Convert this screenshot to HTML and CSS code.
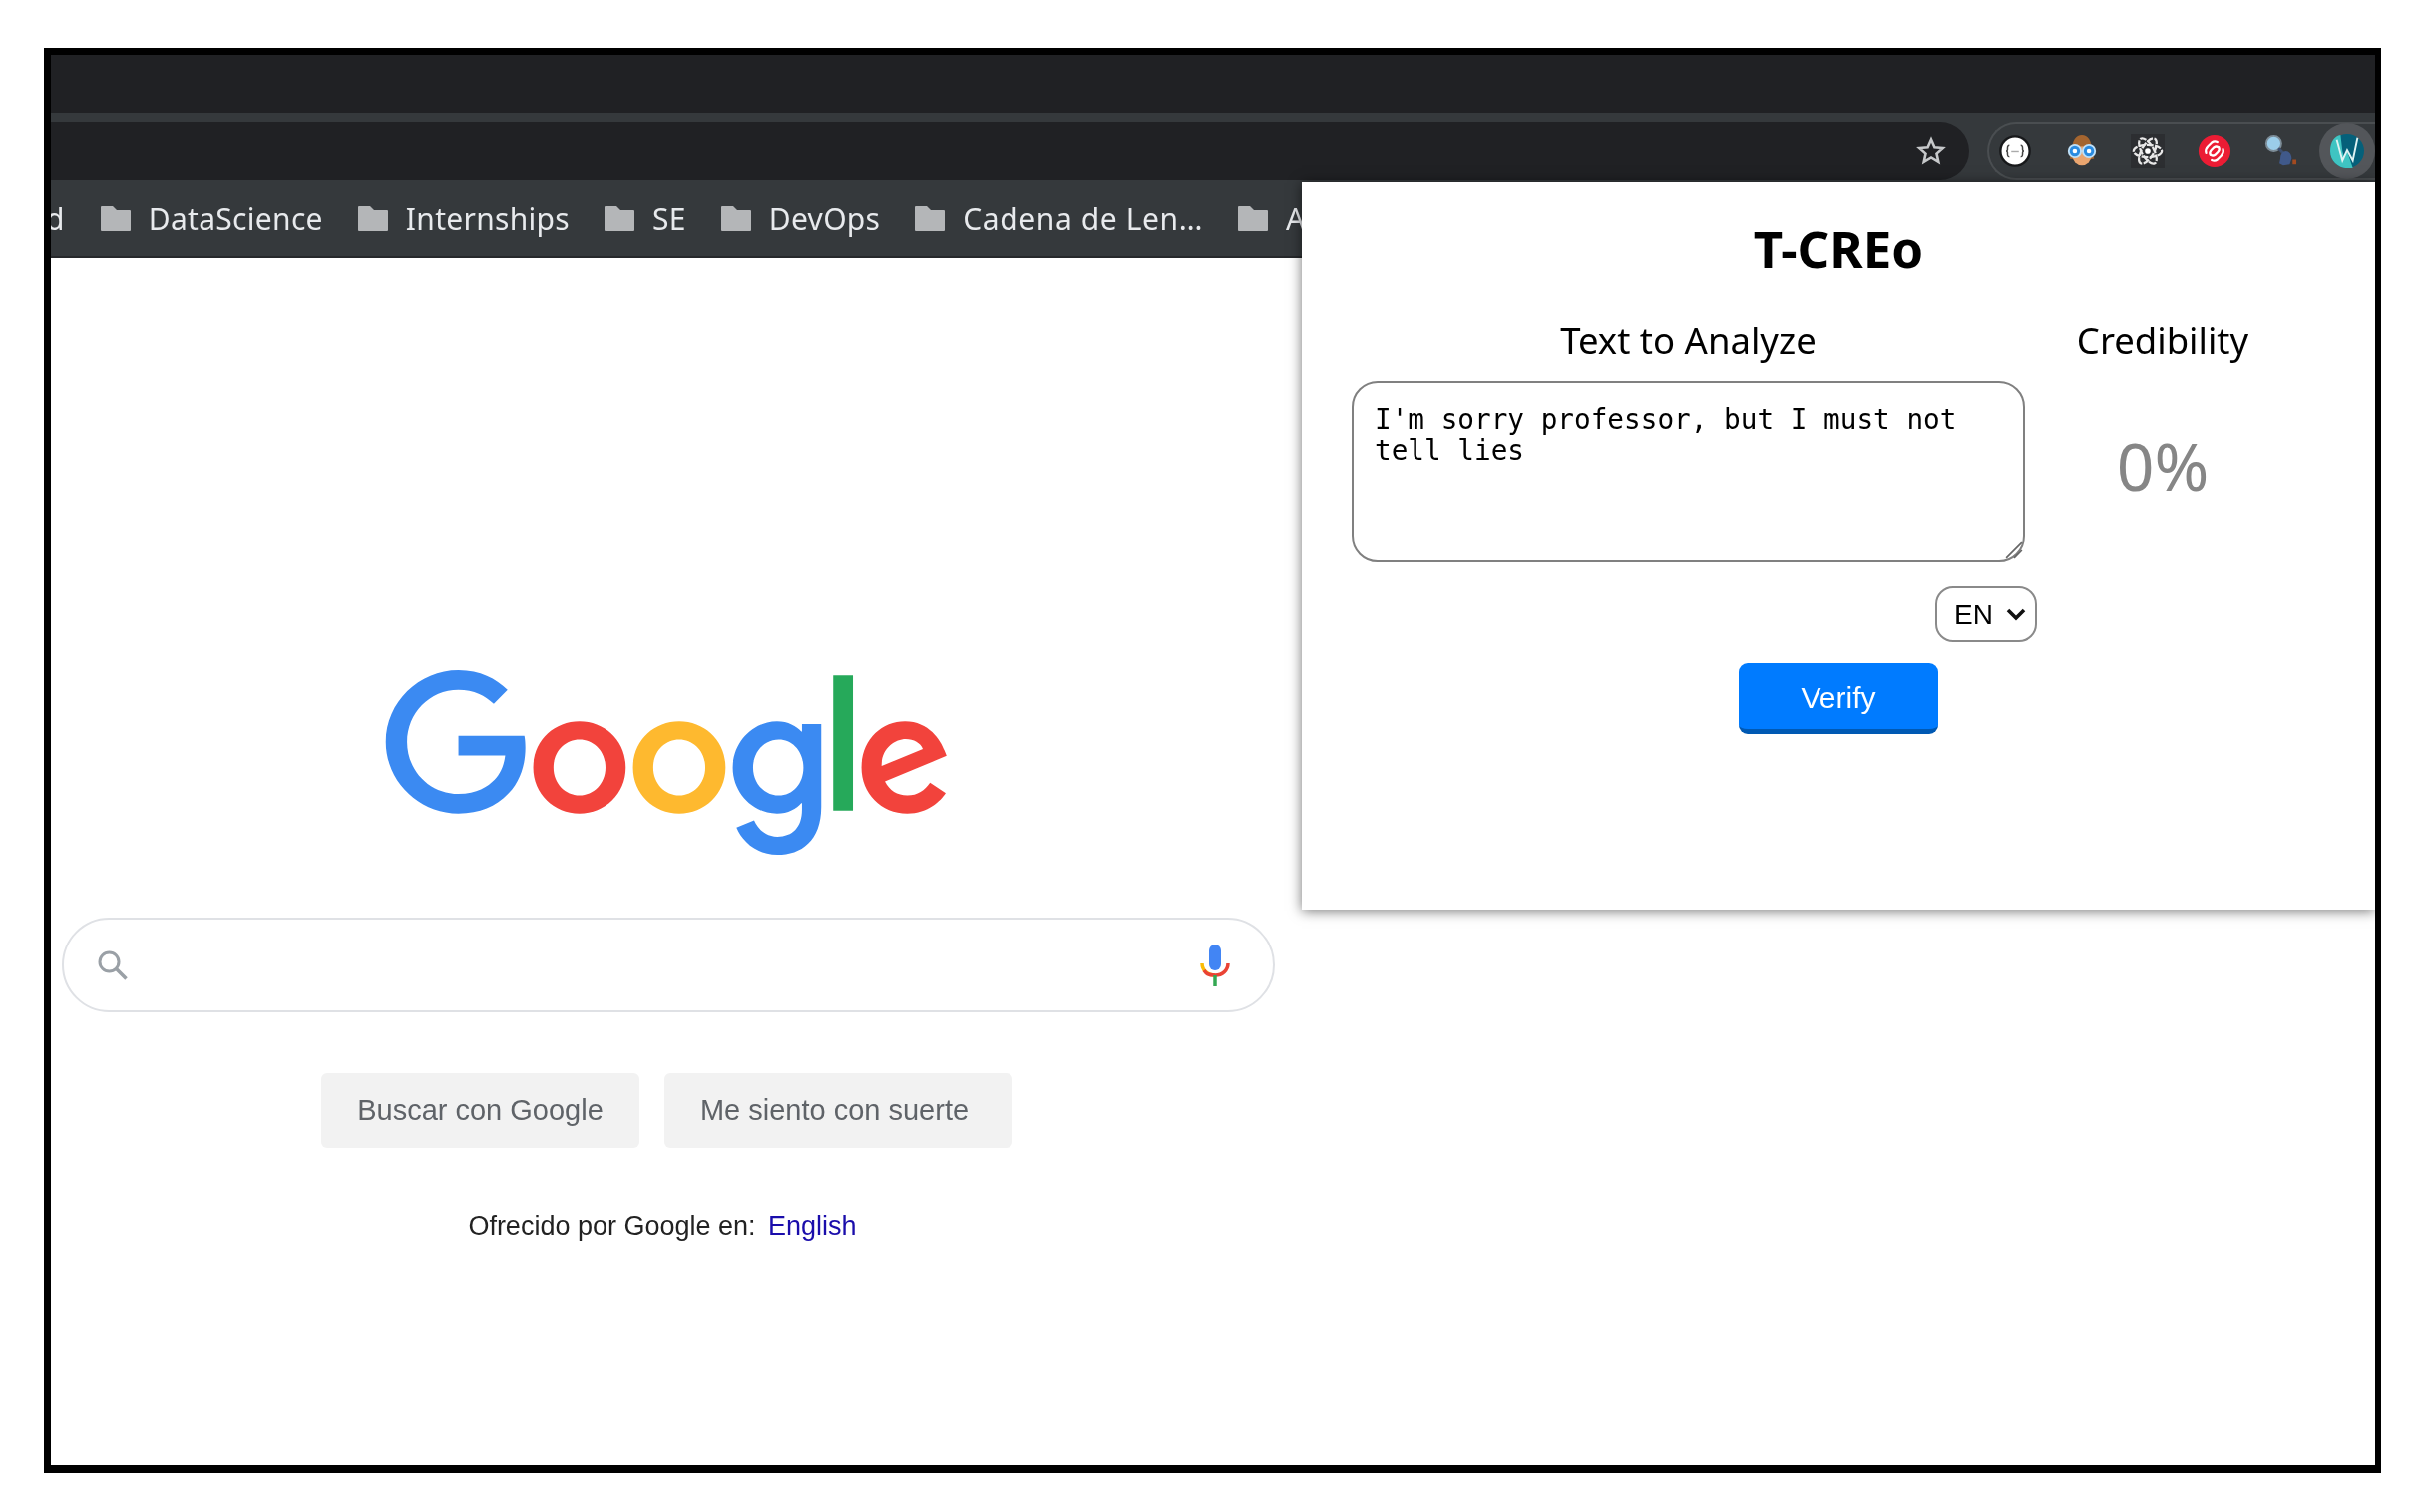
FILE: index.html
```html
<html>
<head>
    <title>T-CREo</title>
    <link rel="stylesheet" href="styles.css">
</head>
<body>
    <div class="frame">
        <div class="screen">
            <div class="tabstrip"></div>

            <div class="toolbar">
                <div class="omnibox">
                    <svg class="star" viewBox="0 0 30 30"><path d="M15 3.5l3.4 7.7 8.4.8-6.3 5.6 1.8 8.2-7.3-4.3-7.3 4.3 1.8-8.2-6.3-5.6 8.4-.8z"/></svg>
                </div>
                <div class="extensions">
                    <span class="ext">
                        <svg viewBox="0 0 36 36"><circle cx="18" cy="18" r="15.5" fill="#fff" stroke="#17181a" stroke-width="2.500"/><path d="M12 12c-2 0-2 1-2 3v1.500c0 1-.7 1.500-1.500 1.500.8 0 1.500.5 1.500 1.500V21c0 2 0 3 2 3M24 12c2 0 2 1 2 3v1.500c0 1 .7 1.500 1.500 1.500-.8 0-1.500.5-1.500 1.500V21c0 2 0 3-2 3" fill="none" stroke="#444" stroke-width="1.600"/><path d="M14 18.500h8" stroke="#aaa" stroke-width="1.500"/></svg>
                    </span>
                    <span class="ext">
                        <svg viewBox="0 0 36 36"><path d="M8 17C7 7 12 1 18 1s11 6 10 16l3 9-6 1H11l-6-1z" fill="#a4652f"/><circle cx="18" cy="23" r="10" fill="#eaa56f"/><circle cx="10.500" cy="18" r="6.500" fill="#2a8be0" stroke="#bfe0f7" stroke-width="2"/><circle cx="25.500" cy="18" r="6.500" fill="#2a8be0" stroke="#bfe0f7" stroke-width="2"/><circle cx="10.500" cy="18" r="2.400" fill="#fff"/><circle cx="25.500" cy="18" r="2.400" fill="#fff"/></svg>
                    </span>
                    <span class="ext ext-dark">
                        <svg viewBox="0 0 36 36" fill="none" stroke="#e8e8e8" stroke-width="2.400" stroke-dasharray="7 1.500"><ellipse cx="18" cy="18" rx="15" ry="6.500"/><ellipse cx="18" cy="18" rx="15" ry="6.500" transform="rotate(60 18 18)"/><ellipse cx="18" cy="18" rx="15" ry="6.500" transform="rotate(120 18 18)"/><circle cx="18" cy="18" r="3" fill="#fff" stroke="none"/></svg>
                    </span>
                    <span class="ext">
                        <svg viewBox="0 0 36 36"><circle cx="18" cy="18" r="17" fill="#ec1c34"/><path d="M9 20c-1-3 0-5 2-7l4-4c2-1.500 4-1.500 6-.5M27 16c1 3 0 5-2 7l-4 4c-2 1.500-4 1.500-6 .5M13.500 22c-1-2-.5-3.500 1-5l3-3c1.500-1 3-1 4.500 0M22.500 14c1 2 .5 3.500-1 5l-3 3c-1.500 1-3 1-4.500 0" fill="none" stroke="#fff" stroke-width="2.400" stroke-linecap="round"/></svg>
                    </span>
                    <span class="ext">
                        <svg viewBox="0 0 36 36"><circle cx="11" cy="10" r="8" fill="#9bcdea" stroke="#7d8d98" stroke-width="2"/><path d="M16 15l6 6" stroke="#3d4f70" stroke-width="3"/><path d="M18 26c0-5 3-8 6-8s6 3 6 8l-2 6-7 1-4-2z" fill="#40598a"/><path d="M31 27h4v5h-4z" fill="#a34a20"/></svg>
                    </span>
                    <span class="ext ext-active">
                        <svg viewBox="0 0 36 36"><circle cx="18" cy="18" r="18" fill="#05607a"/><path d="M0 18C0 8 5 2 11 1l2 17 5 18C8 36 0 28 0 18z" fill="#3fc4c2"/><path d="M12 31l6-13 6 18H16z" fill="#3fc4c2"/><path d="M7 6l6 22 5-11 6 11 5-24" fill="none" stroke="#dff3f3" stroke-width="2"/></svg>
                    </span>
                </div>
            </div>

            <div class="bookmarks">
                <span class="bookmark-cut">d</span>
                <span class="bookmark">
                    <svg class="folder" viewBox="0 0 30 25"><path d="M1 0h11l4 4h13a1 1 0 0 1 1 1v19a1 1 0 0 1-1 1H1a1 1 0 0 1-1-1V1a1 1 0 0 1 1-1z"/></svg>
                    DataScience
                </span>
                <span class="bookmark">
                    <svg class="folder" viewBox="0 0 30 25"><path d="M1 0h11l4 4h13a1 1 0 0 1 1 1v19a1 1 0 0 1-1 1H1a1 1 0 0 1-1-1V1a1 1 0 0 1 1-1z"/></svg>
                    Internships
                </span>
                <span class="bookmark">
                    <svg class="folder" viewBox="0 0 30 25"><path d="M1 0h11l4 4h13a1 1 0 0 1 1 1v19a1 1 0 0 1-1 1H1a1 1 0 0 1-1-1V1a1 1 0 0 1 1-1z"/></svg>
                    SE
                </span>
                <span class="bookmark">
                    <svg class="folder" viewBox="0 0 30 25"><path d="M1 0h11l4 4h13a1 1 0 0 1 1 1v19a1 1 0 0 1-1 1H1a1 1 0 0 1-1-1V1a1 1 0 0 1 1-1z"/></svg>
                    DevOps
                </span>
                <span class="bookmark bookmark-long">
                    <svg class="folder" viewBox="0 0 30 25"><path d="M1 0h11l4 4h13a1 1 0 0 1 1 1v19a1 1 0 0 1-1 1H1a1 1 0 0 1-1-1V1a1 1 0 0 1 1-1z"/></svg>
                    Cadena de Len…
                </span>
                <span class="bookmark">
                    <svg class="folder" viewBox="0 0 30 25"><path d="M1 0h11l4 4h13a1 1 0 0 1 1 1v19a1 1 0 0 1-1 1H1a1 1 0 0 1-1-1V1a1 1 0 0 1 1-1z"/></svg>
                    A
                </span>
            </div>

            <div class="page">
                <svg class="logo" viewBox="0 0 272 92">
                    <path class="red" d="M115.75 47.18c0 12.77-9.99 22.18-22.25 22.18s-22.25-9.41-22.25-22.18C71.25 34.32 81.24 25 93.5 25s22.25 9.32 22.25 22.18zm-9.74 0c0-7.98-5.79-13.44-12.51-13.44S80.99 39.2 80.99 47.18c0 7.9 5.79 13.44 12.51 13.44s12.51-5.55 12.51-13.44z"/>
                    <path class="yellow" d="M163.75 47.18c0 12.77-9.99 22.18-22.25 22.18s-22.25-9.41-22.25-22.18c0-12.85 9.99-22.18 22.25-22.18s22.25 9.32 22.25 22.18zm-9.74 0c0-7.98-5.79-13.44-12.51-13.44s-12.51 5.46-12.51 13.44c0 7.9 5.79 13.44 12.51 13.44s12.51-5.55 12.51-13.44z"/>
                    <path class="blue" d="M209.75 26.34v39.82c0 16.38-9.66 23.07-21.08 23.07-10.75 0-17.22-7.19-19.66-13.07l8.48-3.53c1.51 3.61 5.21 7.87 11.17 7.87 7.31 0 11.84-4.51 11.84-13v-3.19h-.34c-2.18 2.69-6.38 5.04-11.68 5.04-11.09 0-21.25-9.66-21.25-22.09 0-12.52 10.16-22.26 21.25-22.26 5.29 0 9.49 2.35 11.68 4.96h.34v-3.61h9.25zm-8.56 20.92c0-7.81-5.21-13.52-11.84-13.52-6.72 0-12.35 5.71-12.35 13.52 0 7.73 5.63 13.36 12.35 13.36 6.63 0 11.84-5.63 11.84-13.36z"/>
                    <path class="green" d="M225 3v65h-9.5V3h9.5z"/>
                    <path class="red" d="M262.02 54.48l7.56 5.04c-2.44 3.61-8.32 9.83-18.48 9.83-12.6 0-22.01-9.74-22.01-22.18 0-13.19 9.49-22.18 20.92-22.18 11.51 0 17.14 9.16 18.98 14.11l1.01 2.52-29.65 12.28c2.27 4.45 5.8 6.72 10.75 6.72 4.96 0 8.4-2.44 10.92-6.14zm-23.27-7.98l19.82-8.23c-1.09-2.77-4.37-4.7-8.23-4.7-4.95 0-11.84 4.37-11.59 12.93z"/>
                    <path class="blue" d="M35.29 41.41V32H67c.31 1.64.47 3.58.47 5.68 0 7.06-1.93 15.79-8.15 22.01-6.05 6.3-13.78 9.66-24.02 9.66C16.32 69.35.36 53.89.36 34.91.36 15.93 16.32.47 35.3.47c10.5 0 17.98 4.12 23.6 9.49l-6.64 6.64c-4.03-3.78-9.49-6.72-16.97-6.72-13.86 0-24.7 11.17-24.7 25.03 0 13.86 10.84 25.03 24.7 25.03 8.99 0 14.11-3.61 17.39-6.89 2.66-2.66 4.41-6.46 5.1-11.65l-22.49.01z"/>
                </svg>

                <div class="searchbox">
                    <svg class="search-icon" viewBox="0 0 32 32"><circle cx="12.500" cy="12.500" r="9.500" fill="none" stroke="#9aa0a6" stroke-width="3"/><path d="M19.500 19.500l10 10" stroke="#9aa0a6" stroke-width="3.500"/></svg>
                    <svg class="mic-icon" viewBox="0 0 30 42">
                        <rect x="9" y="0" width="12" height="26" rx="6" fill="#4285f4"/>
                        <path d="M2 19c0 7 5.500 12 13 12" fill="none" stroke="#fbbc05" stroke-width="3.500"/>
                        <path d="M28 19c0 7-5.500 12-13 12s-9-2-11-5" fill="none" stroke="#ea4335" stroke-width="3.500"/>
                        <path d="M15 31v11" stroke="#34a853" stroke-width="3.500"/>
                    </svg>
                </div>

                <div class="search-buttons">
                    <span class="gbutton gbutton-search">Buscar con Google</span>
                    <span class="gbutton gbutton-lucky">Me siento con suerte</span>
                </div>

                <p class="offered">Ofrecido por Google en: <a class="lang-link">English</a></p>
            </div>

            <section class="popup">
                <h1>T-CREo</h1>
                <div class="popup-columns">
                    <div class="analyze">
                        <h2>Text to Analyze</h2>
                        <div class="text-wrap">
                            <textarea class="analyze-text" spellcheck="false">I'm sorry professor, but I must not tell lies</textarea>
                            <svg class="grip" viewBox="0 0 16 16"><path d="M1 15L15 1M8 15l7-7" fill="none" stroke="#666" stroke-width="1.500"/></svg>
                        </div>
                        <select class="lang-select"><option>EN</option></select>
                    </div>
                    <div class="credibility">
                        <h2>Credibility</h2>
                        <p class="score">0%</p>
                    </div>
                </div>
                <button class="verify-btn">Verify</button>
            </section>
        </div>
    </div>
</body>
</html>
```

FILE: styles.css
```css
html, body { margin: 0; background: white; }
body { font-family: 'Liberation Sans', Arial, sans-serif; }

.frame {
    width: 2343px;
    height: 1429px;
    margin: 48px 0 0 44px;
    border-style: solid;
    border-color: black;
    border-width: 7px 6px 8px 7px;
    box-sizing: border-box;
}
.screen {
    position: relative;
    height: 100%;
    overflow: hidden;
    background: white;
    filter: blur(0.6px);
}

/* browser chrome */
.tabstrip { height: 58px; background: #202124; }
.toolbar {
    display: flex;
    height: 69px;
    padding-top: 9px;
    box-sizing: border-box;
    background: #35393c;
}
.omnibox {
    display: flex;
    align-items: center;
    justify-content: flex-end;
    flex: none;
    width: 1923px;
    height: 58px;
    padding-right: 23px;
    box-sizing: border-box;
    background: #202124;
    border-radius: 0 29px 29px 0;
}
.star { width: 30px; height: 30px; fill: none; stroke: #c6c8ca; stroke-width: 2.6; }
.extensions {
    display: flex;
    align-items: center;
    flex: none;
    width: 389px;
    height: 58px;
    margin-left: 18px;
    box-sizing: border-box;
    border: 2px solid #4a4e51;
    border-right: none;
    border-radius: 29px 0 0 29px;
}
.ext {
    display: flex;
    align-items: center;
    justify-content: center;
    flex: none;
    width: 66.5px;
    height: 100%;
}
.ext:first-child { margin-left: -7px; }
.ext svg { width: 34px; height: 34px; }
.ext-dark svg { background: #2c2e31; }
.ext-active {
    width: 56px;
    height: 56px;
    margin-left: 5px;
    border-radius: 50%;
    background: #53565a;
}

.bookmarks {
    display: flex;
    align-items: center;
    gap: 35px;
    height: 75px;
    overflow: hidden;
    background: #35393c;
    color: #e8eaed;
    font-family: 'Noto Sans', sans-serif;
    font-size: 30px;
    letter-spacing: 0.3px;
    white-space: nowrap;
    border-bottom: 2px solid #26282b;
}
.bookmark-cut { margin-left: -5px; margin-right: 1px; }
.bookmark { display: flex; align-items: center; gap: 18px; }
.bookmark-long { letter-spacing: 0.6px; }
.folder { width: 30px; height: 25px; fill: #b4b6b8; flex: none; }

/* google page */
.page {
    display: flex;
    flex-direction: column;
    align-items: center;
    width: 1238px;
    padding-top: 412px;
}
.logo { width: 567px; height: 192px; margin-left: -1px; }
.red { fill: #f2433c; }
.yellow { fill: #feb92f; }
.blue { fill: #3b8af2; }
.green { fill: #26a95a; }

.searchbox {
    display: flex;
    align-items: center;
    justify-content: space-between;
    width: 1216px;
    height: 95px;
    margin-top: 57px;
    padding: 0 43px 0 33px;
    box-sizing: border-box;
    border: 2px solid #dfe1e5;
    border-radius: 48px;
}
.search-icon { width: 32px; height: 32px; }
.mic-icon { width: 30px; height: 42px; }

.search-buttons { display: flex; gap: 25px; margin-top: 61px; margin-left: -3px; }
.gbutton {
    display: flex;
    align-items: center;
    justify-content: center;
    height: 75px;
    box-sizing: border-box;
    background: #f2f2f2;
    border-radius: 6px;
    color: #5f6368;
    font-size: 29px;
}
.gbutton-search { width: 319px; }
.gbutton-lucky { width: 349px; padding-right: 8px; }

.offered { margin: 63px 0 0 -12px; color: #222; font-size: 27px; }
.lang-link { color: #1a0dab; margin-left: 5px; }

/* extension popup */
.popup {
    position: absolute;
    top: 127px;
    left: 1254px;
    width: 1076px;
    height: 730px;
    box-sizing: border-box;
    background: white;
    box-shadow: 0 1px 12px rgba(0,0,0,0.55);
    text-align: center;
    color: black;
    font-family: 'Noto Sans', sans-serif;
}
.popup h1 {
    margin: 38px 0 0;
    font-size: 51px;
    line-height: 58px;
    font-weight: 700;
}
.popup h2 {
    margin: 0;
    font-size: 36.5px;
    line-height: 46px;
    font-weight: 400;
}
.popup-columns {
    display: flex;
    padding: 0 0 0 50px;
    margin-top: 40px;
}
.analyze {
    display: flex;
    flex-direction: column;
    width: 675px;
}
.text-wrap { position: relative; height: 181px; margin-top: 18px; }
.analyze-text {
    display: block;
    width: 675px;
    height: 181px;
    padding: 21px 21px;
    box-sizing: border-box;
    border: 2px solid #808080;
    border-radius: 26px;
    font-family: 'DejaVu Sans Mono', monospace;
    font-size: 27.7px;
    line-height: 31px;
    outline: none;
    resize: none;
}
.grip { position: absolute; right: 2px; bottom: 3px; width: 18px; height: 18px; }
.lang-select {
    appearance: none;
    align-self: flex-end;
    width: 102px;
    height: 56px;
    margin: 25px -12px 0 0;
    padding-left: 17px;
    background: white url("data:image/svg+xml,%3Csvg xmlns='http://www.w3.org/2000/svg' viewBox='0 0 20 14'%3E%3Cpath d='M2 3l8 8 8-8' fill='none' stroke='%23111' stroke-width='3.600'/%3E%3C/svg%3E") no-repeat right 9px center / 20px 14px;
    border: 2px solid #8a8a8a;
    border-radius: 18px;
    font-family: 'Liberation Sans', Arial, sans-serif;
    font-size: 28px;
    color: black;
}
.credibility { width: 252px; margin-left: 12px; }
.score {
    margin: 62px 0 0;
    color: #868686;
    font-size: 66px;
    line-height: 80px;
}
.verify-btn {
    display: block;
    width: 200px;
    height: 71px;
    margin: 21px auto 0;
    padding: 3px 0 0;
    background: #007bff;
    border: none;
    border-bottom: 5px solid #0059b3;
    border-radius: 9px;
    color: white;
    font-family: 'Liberation Sans', Arial, sans-serif;
    font-size: 30px;
}
```
